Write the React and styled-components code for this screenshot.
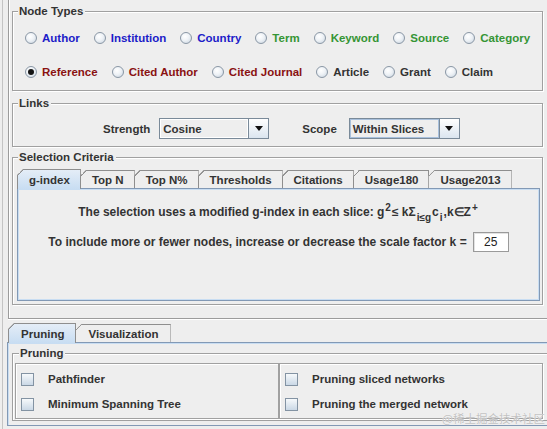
import React from 'react'
import styled, { createGlobalStyle } from 'styled-components'

const GlobalStyle = createGlobalStyle`
  html, body { margin: 0; padding: 0; background: #eeeeee; }
  body { font-family: "Liberation Sans", Arial, sans-serif; }
`

const Page = styled.div`
  position: relative;
  width: 547px;
  height: 429px;
  overflow: hidden;
  box-sizing: border-box;
  padding-left: 2px;
  background: #eeeeee;
  font: bold 11.5px "Liberation Sans", Arial, sans-serif;
  color: #333333;
`

const Frame = styled.div`
  height: 100%;
  border-left: 1px solid #c4c4c4;
  display: flex;
  flex-direction: column;
`

const Upper = styled.div`
  margin-left: 5px;
  padding: 0 4px 13px 3px;
  border-left: 1px solid #9c9c9c;
  border-bottom: 1px solid #9c9c9c;
  box-shadow: inset 1px 0 0 #ffffff, 0 1px 0 #ffffff;
`

const Group = styled.section`
  margin-top: ${p => p.$top}px;
  padding-bottom: ${p => p.$bottom}px;
  border: 1px solid #a0a0a0;
  box-shadow: 1px 1px 0 #ffffff, inset 1px 1px 0 #ffffff;
`

const GroupTitle = styled.div`
  width: fit-content;
  margin: -8px 0 0 ${p => p.$indent || 5}px;
  padding: 0 2px 0 1px;
  line-height: 14px;
  background: #eeeeee;
`

const RadioRow = styled.div`
  display: flex;
  align-items: center;
  gap: 14px;
  height: 20px;
  margin-top: ${p => p.$top}px;
  padding-left: 12px;
`

const RadioItem = styled.label`
  display: flex;
  align-items: center;
  gap: 5px;
  color: ${p => p.$color};
  white-space: nowrap;
`

const Radio = styled.span`
  width: 12px;
  height: 12px;
  box-sizing: border-box;
  border-radius: 50%;
  border: 1px solid #8a97a5;
  background: radial-gradient(circle at 40% 35%, #ffffff 0%, #eef2f6 45%, #c6d2de 100%);
  display: grid;
  place-items: center;

  &::after {
    content: '';
    width: 6px;
    height: 6px;
    border-radius: 50%;
    background: ${p => (p.$checked ? '#141414' : 'transparent')};
  }
`

const LinkRow = styled.div`
  display: flex;
  align-items: center;
  height: 21px;
  margin-top: 8px;
  padding-left: 90px;
`

const FieldLabel = styled.span`
  margin: 0 ${p => p.$gap}px 0 ${p => p.$lead || 0}px;
`

const Combo = styled.div`
  display: flex;
  width: ${p => p.$width}px;
  height: 21px;
  box-sizing: border-box;
  border: 1px solid #7a8a99;
  background: #eeeeee;
`

const ComboValue = styled.div`
  flex: 1;
  display: flex;
  align-items: center;
  padding-left: 3px;
  box-shadow: inset 0 0 0 1px ${p => (p.$focused ? '#a8c0dc' : '#ffffff')};
`

const ComboArrow = styled.div`
  width: 19px;
  border-left: 1px solid #7a8a99;
  background: linear-gradient(#ffffff, #dbe5ef);
  display: grid;
  place-items: center;

  &::after {
    content: '';
    border-left: 4px solid transparent;
    border-right: 4px solid transparent;
    border-top: 5px solid #111111;
  }
`

const TabStrip = styled.div`
  display: flex;
  align-items: flex-end;
  margin: ${p => p.$top}px 0 0 ${p => p.$left}px;
`

const Tab = styled.div`
  position: relative;
  z-index: ${p => (p.$selected ? 1 : 0)};
  box-sizing: border-box;
  height: ${p => (p.$selected ? 20 : 18)}px;
  margin-bottom: ${p => (p.$selected ? -1 : 0)}px;
  padding: 0 ${p => p.$pad}px 0 ${p => p.$pad + 1}px;
  display: flex;
  align-items: center;
  white-space: nowrap;
  border: 1px solid #8e8e8e;
  border-bottom: none;
  clip-path: polygon(6px 0, 100% 0, 100% 100%, 0 100%, 0 6px);
  background:
    linear-gradient(to bottom right, transparent 50%, #8e8e8e 50%, #8e8e8e calc(50% + 1.2px), transparent calc(50% + 1.2px)) -1px -1px / 6px 6px no-repeat,
    ${p => (p.$selected ? 'linear-gradient(#e4edf7, #c8ddf2)' : '#eeeeee')};

  & + & {
    margin-left: -1px;
  }
`

const TabPanel = styled.div`
  box-sizing: border-box;
  height: ${p => p.$height}px;
  margin: 0 ${p => p.$right}px 0 ${p => p.$left}px;
  border: 1px solid #8299b5;
  box-shadow: inset 0 0 0 1px #c8ddf2;
  background: #eeeeee;
`

const Sentence = styled.div`
  display: flex;
  justify-content: center;
  align-items: center;
  gap: 6px;
  height: ${p => p.$height}px;
  margin-top: ${p => p.$top}px;
  font-size: 12px;
  white-space: nowrap;
`

const Sup = styled.span`
  font-size: 10px;
  line-height: 0;
  vertical-align: 5px;
  margin: 0 1px;
`

const Sub = styled.span`
  font-size: 10px;
  line-height: 0;
  vertical-align: -5px;
  margin: 0 1px;
`

const NumberField = styled.div`
  width: 36px;
  height: 20px;
  box-sizing: border-box;
  border: 1px solid #9a9a9a;
  box-shadow: inset 1px 1px 0 #e2e2e2;
  background: #ffffff;
  display: grid;
  place-items: center;
  font-weight: normal;
  font-size: 12px;
  color: #222222;
`

const Lower = styled.div`
  margin-left: 4px;
`

const WidePanel = styled(TabPanel)`
  width: 560px;
  padding-top: 10px;
  padding-left: 4px;
  box-shadow: inset 0 1px 0 #c8ddf2, inset 1px 0 0 #c8ddf2;
`

const PruneGroup = styled.section`
  width: 548px;
  box-sizing: border-box;
  height: 68px;
  border: 1px solid #a0a0a0;
  box-shadow: inset 1px 1px 0 #ffffff;
`

const OptionGrid = styled.div`
  display: grid;
  grid-template-columns: 264px 264px;
  margin: 3px 0 0 2px;
`

const OptionBox = styled.div`
  box-sizing: border-box;
  height: 56px;
  padding: 5px 0 4px 5px;
  display: flex;
  flex-direction: column;
  gap: 5px;
  border: 1px solid #a0a0a0;
  box-shadow: 1px 1px 0 #ffffff, inset 1px 1px 0 #ffffff;
`

const CheckRow = styled.label`
  display: flex;
  align-items: center;
  gap: 14px;
  height: 20px;
  white-space: nowrap;
`

const Checkbox = styled.span`
  width: 13px;
  height: 13px;
  box-sizing: border-box;
  border: 1px solid #8393a3;
  background: linear-gradient(#f6f9fb, #cad8e6);
`

const Watermark = styled.div`
  position: absolute;
  left: 442px;
  top: 410px;
  font: normal 11.5px "Noto Sans CJK SC", sans-serif;
  color: #c2c2c2;
  text-shadow: 0 0 1px #ffffff;
  white-space: nowrap;
`

const BLUE = '#1c1cc8'
const GREEN = '#359535'
const RED = '#8a1212'
const DARK = '#333333'

const nodeRows = [
  [
    ['Author', BLUE],
    ['Institution', BLUE],
    ['Country', BLUE],
    ['Term', GREEN],
    ['Keyword', GREEN],
    ['Source', GREEN],
    ['Category', GREEN]
  ],
  [
    ['Reference', RED, true],
    ['Cited Author', RED],
    ['Cited Journal', RED],
    ['Article', DARK],
    ['Grant', DARK],
    ['Claim', DARK]
  ]
]

const criteriaTabs = ['g-index', 'Top N', 'Top N%', 'Thresholds', 'Citations', 'Usage180', 'Usage2013']

export default function App() {
  return (
    <Page>
      <GlobalStyle />
      <Frame>
        <Upper>
          <Group $top={11} $bottom={8}>
            <GroupTitle>Node Types</GroupTitle>
            {nodeRows.map((row, i) => (
              <RadioRow key={i} $top={i === 0 ? 10 : 14}>
                {row.map(([name, color, checked]) => (
                  <RadioItem key={name} $color={color}>
                    <Radio $checked={checked} />
                    {name}
                  </RadioItem>
                ))}
              </RadioRow>
            ))}
          </Group>

          <Group $top={12} $bottom={7}>
            <GroupTitle>Links</GroupTitle>
            <LinkRow>
              <FieldLabel $gap={9}>Strength</FieldLabel>
              <Combo $width={110}>
                <ComboValue>Cosine</ComboValue>
                <ComboArrow />
              </Combo>
              <FieldLabel $lead={33} $gap={12}>Scope</FieldLabel>
              <Combo $width={111}>
                <ComboValue $focused>Within Slices</ComboValue>
                <ComboArrow />
              </Combo>
            </LinkRow>
          </Group>

          <Group $top={10} $bottom={3}>
            <GroupTitle>Selection Criteria</GroupTitle>
            <TabStrip $top={5} $left={4}>
              {criteriaTabs.map((t, i) => (
                <Tab key={t} $selected={i === 0} $pad={10}>
                  {t}
                </Tab>
              ))}
            </TabStrip>
            <TabPanel $height={113} $left={4} $right={2}>
              <Sentence $height={20} $top={13}>
                <span>
                  The selection uses a modified g-index in each slice: g<Sup>2</Sup>≤ kΣ<Sub>i≤g</Sub>c<Sub>i</Sub>,k∈Z<Sup>+</Sup>
                </span>
              </Sentence>
              <Sentence $height={21} $top={9}>
                <span>To include more or fewer nodes, increase or decrease the scale factor k =</span>
                <NumberField>25</NumberField>
              </Sentence>
            </TabPanel>
          </Group>
        </Upper>

        <Lower>
          <TabStrip $top={4} $left={1}>
            <Tab $selected $pad={11}>Pruning</Tab>
            <Tab $pad={11}>Visualization</Tab>
          </TabStrip>
          <WidePanel $height={84} $left={0} $right={0}>
            <PruneGroup>
              <GroupTitle $indent={6}>Pruning</GroupTitle>
              <OptionGrid>
                <OptionBox>
                  <CheckRow><Checkbox />Pathfinder</CheckRow>
                  <CheckRow><Checkbox />Minimum Spanning Tree</CheckRow>
                </OptionBox>
                <OptionBox>
                  <CheckRow><Checkbox />Pruning sliced networks</CheckRow>
                  <CheckRow><Checkbox />Pruning the merged network</CheckRow>
                </OptionBox>
              </OptionGrid>
            </PruneGroup>
          </WidePanel>
        </Lower>
      </Frame>
      <Watermark>@稀土掘金技术社区</Watermark>
    </Page>
  )
}
